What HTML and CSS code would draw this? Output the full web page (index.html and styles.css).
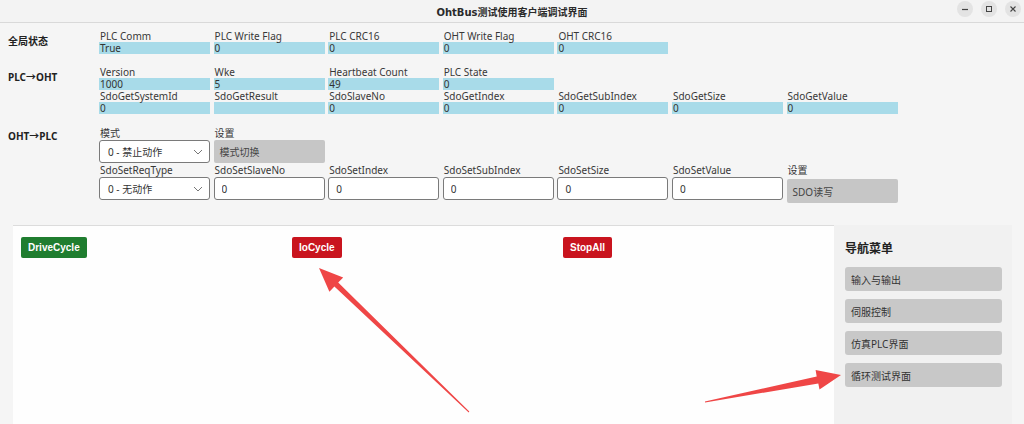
FILE: index.html
```html
<!DOCTYPE html>
<html lang="zh-CN">
  <head>
    <meta charset="UTF-8" />
    <meta name="viewport" content="width=device-width, initial-scale=1.0" />
    <title>OhtBus测试使用客户端调试界面</title>
    <link rel="stylesheet" href="styles.css">
  </head>
  <body>
    <header class="titlebar">
      <span class="title">OhtBus测试使用客户端调试界面</span>
      <div class="win-buttons">
        <span class="win-btn">
          <svg width="8" height="8" viewBox="0 0 8 8"><path d="M1 4.5h6" stroke="#444" stroke-width="1.2"/></svg>
        </span>
        <span class="win-btn">
          <svg width="8" height="8" viewBox="0 0 8 8"><rect x="1.5" y="1.5" width="5" height="5" fill="none" stroke="#444" stroke-width="1"/></svg>
        </span>
        <span class="win-btn">
          <svg width="8" height="8" viewBox="0 0 8 8"><path d="M1.5 1.5l5 5M6.5 1.5l-5 5" stroke="#444" stroke-width="1.1"/></svg>
        </span>
      </div>
    </header>

    <main class="status">
      <section class="group">
        <div class="group-name">全局状态</div>
        <div class="fields">
          <div class="field"><div class="field-label">PLC Comm</div><div class="bar">True</div></div>
          <div class="field"><div class="field-label">PLC Write Flag</div><div class="bar">0</div></div>
          <div class="field"><div class="field-label">PLC CRC16</div><div class="bar">0</div></div>
          <div class="field"><div class="field-label">OHT Write Flag</div><div class="bar">0</div></div>
          <div class="field"><div class="field-label">OHT CRC16</div><div class="bar">0</div></div>
        </div>
      </section>

      <section class="group">
        <div class="group-name">PLC→OHT</div>
        <div class="fields">
          <div class="field"><div class="field-label">Version</div><div class="bar">1000</div></div>
          <div class="field"><div class="field-label">Wke</div><div class="bar">5</div></div>
          <div class="field"><div class="field-label">Heartbeat Count</div><div class="bar">49</div></div>
          <div class="field"><div class="field-label">PLC State</div><div class="bar">0</div></div>
          <div class="field new-row"><div class="field-label">SdoGetSystemId</div><div class="bar">0</div></div>
          <div class="field"><div class="field-label">SdoGetResult</div><div class="bar"></div></div>
          <div class="field"><div class="field-label">SdoSlaveNo</div><div class="bar">0</div></div>
          <div class="field"><div class="field-label">SdoGetIndex</div><div class="bar">0</div></div>
          <div class="field"><div class="field-label">SdoGetSubIndex</div><div class="bar">0</div></div>
          <div class="field"><div class="field-label">SdoGetSize</div><div class="bar">0</div></div>
          <div class="field"><div class="field-label">SdoGetValue</div><div class="bar">0</div></div>
        </div>
      </section>

      <section class="group group-ctrl">
        <div class="group-name">OHT→PLC</div>
        <div class="fields">
          <div class="field">
            <div class="ctrl-label">模式</div>
            <div class="select">0 - 禁止动作<svg class="chevron" width="10" height="6" viewBox="0 0 10 6"><path d="M1 1l4 4 4-4" fill="none" stroke="#777" stroke-width="1"/></svg></div>
          </div>
          <div class="field">
            <div class="ctrl-label">设置</div>
            <button class="gray-btn">模式切换</button>
          </div>
          <div class="field new-row">
            <div class="ctrl-label">SdoSetReqType</div>
            <div class="select">0 - 无动作<svg class="chevron" width="10" height="6" viewBox="0 0 10 6"><path d="M1 1l4 4 4-4" fill="none" stroke="#777" stroke-width="1"/></svg></div>
          </div>
          <div class="field"><div class="ctrl-label">SdoSetSlaveNo</div><input class="num" value="0" /></div>
          <div class="field"><div class="ctrl-label">SdoSetIndex</div><input class="num" value="0" /></div>
          <div class="field"><div class="ctrl-label">SdoSetSubIndex</div><input class="num" value="0" /></div>
          <div class="field"><div class="ctrl-label">SdoSetSize</div><input class="num" value="0" /></div>
          <div class="field"><div class="ctrl-label">SdoSetValue</div><input class="num" value="0" /></div>
          <div class="field">
            <div class="ctrl-label">设置</div>
            <button class="gray-btn low">SDO读写</button>
          </div>
        </div>
      </section>
    </main>

    <div class="workspace">
      <div class="cycle-panel">
        <div class="cycle-cell"><button class="cycle-btn green">DriveCycle</button></div>
        <div class="cycle-cell"><button class="cycle-btn red">IoCycle</button></div>
        <div class="cycle-cell"><button class="cycle-btn red">StopAll</button></div>
      </div>
      <nav class="nav">
        <h2 class="nav-title">导航菜单</h2>
        <button class="nav-btn">输入与输出</button>
        <button class="nav-btn">伺服控制</button>
        <button class="nav-btn">仿真PLC界面</button>
        <button class="nav-btn">循环测试界面</button>
      </nav>
    </div>

    <!-- callout arrows drawn on top -->
    <svg class="callouts" width="1024" height="424" viewBox="0 0 1024 424">
      <polygon fill="#ef4646" points="319,268 343.2,277.4 338.2,282.6 469.3,411.6 468.7,412.4 334.4,286.6 329.4,291.8" />
      <polygon fill="#ef4646" points="841,375 819.5,389.5 818.3,383.4 705.1,402.5 704.9,401.5 816.7,376.4 815.6,369.9" />
    </svg>
  </body>
</html>
```

FILE: styles.css
```css
* {
  margin: 0;
  padding: 0;
  box-sizing: border-box;
}

body {
  width: 1024px;
  height: 424px;
  overflow: hidden;
  position: relative;
  background: #f5f5f5;
  color: #383838;
  font-family: "Noto Sans", "Noto Sans CJK SC", sans-serif;
  font-size: 10px;
}

/* window title bar */
.titlebar {
  height: 23px;
  display: flex;
  align-items: center;
  justify-content: center;
  position: relative;
  background: #f3f3f3;
  border-bottom: 1px solid #d9d9d9;
}

.title {
  font-family: "DejaVu Sans", "Noto Sans CJK SC", sans-serif;
  font-weight: bold;
  font-size: 10px;
  color: #2a2a2a;
}

.win-buttons {
  position: absolute;
  right: 3px;
  top: 1px;
  display: flex;
  gap: 8px;
}

.win-btn {
  width: 16px;
  height: 16px;
  border-radius: 50%;
  background: #e3e3e3;
  display: flex;
  align-items: center;
  justify-content: center;
}

/* status area */
.status {
  padding: 7px 0 8px 8px;
  display: flex;
  flex-direction: column;
  gap: 12px;
}

.group {
  display: flex;
}

.group-name {
  width: 91px;
  padding-top: 3px;
  font-weight: bold;
  font-size: 10px;
  color: #222;
}

.group-ctrl .group-name {
  padding-top: 2px;
}

.fields {
  display: grid;
  grid-template-columns: repeat(7, 111px);
  column-gap: 3.6px;
}

.new-row {
  grid-column-start: 1;
}

.field-label {
  height: 12px;
  line-height: 12px;
  padding-left: 1px;
  white-space: nowrap;
}

.bar {
  height: 12px;
  line-height: 12px;
  padding-left: 1px;
  background: #a8dbe9;
  color: #333;
}

.ctrl-label {
  height: 14px;
  line-height: 14px;
  padding-left: 1px;
  white-space: nowrap;
}

.select,
.num {
  width: 111px;
  height: 23px;
  background: #fff;
  border: 1px solid #7a7a7a;
  border-radius: 3px;
  font-family: inherit;
  font-size: 10px;
  color: #333;
}

.select {
  display: flex;
  align-items: center;
  justify-content: space-between;
  padding: 0 6px 0 8px;
}

.num {
  padding-left: 7px;
  outline: none;
}

.gray-btn {
  width: 111px;
  height: 23px;
  border: none;
  border-radius: 2px;
  background: #c6c6c6;
  color: #444;
  font-family: inherit;
  font-size: 10px;
  text-align: left;
  padding-left: 6px;
}

.gray-btn.low {
  margin-top: 2px;
  height: 24px;
}

/* lower work area */
.workspace {
  margin: 14px 12px 0 13px;
  height: 200px;
  display: flex;
}

.cycle-panel {
  flex: 1;
  background: #fefefe;
  border-top: 1px solid #dcdcdc;
  display: grid;
  grid-template-columns: repeat(3, 1fr);
  align-items: start;
  padding: 11px 0 0 8px;
}

.cycle-btn {
  height: 21px;
  padding: 0 7px;
  border: none;
  border-radius: 2px;
  color: #fff;
  font-family: "Liberation Sans", sans-serif;
  font-weight: bold;
  font-size: 10px;
}

.cycle-btn.green {
  background: #1f7d2f;
}

.cycle-btn.red {
  background: #c9141e;
}

.nav {
  width: 178px;
  background: #f1f1f1;
  padding: 16px 10px 0 11px;
  display: flex;
  flex-direction: column;
  gap: 8px;
}

.nav-title {
  font-size: 12px;
  font-weight: bold;
  line-height: 16px;
  color: #222;
  margin-bottom: 2px;
}

.nav-btn {
  height: 24px;
  border: none;
  border-radius: 3px;
  background: #c8c8c8;
  color: #333;
  font-family: inherit;
  font-size: 10px;
  text-align: left;
  padding-left: 6px;
}

.callouts {
  position: absolute;
  left: 0;
  top: 0;
  pointer-events: none;
}
```
